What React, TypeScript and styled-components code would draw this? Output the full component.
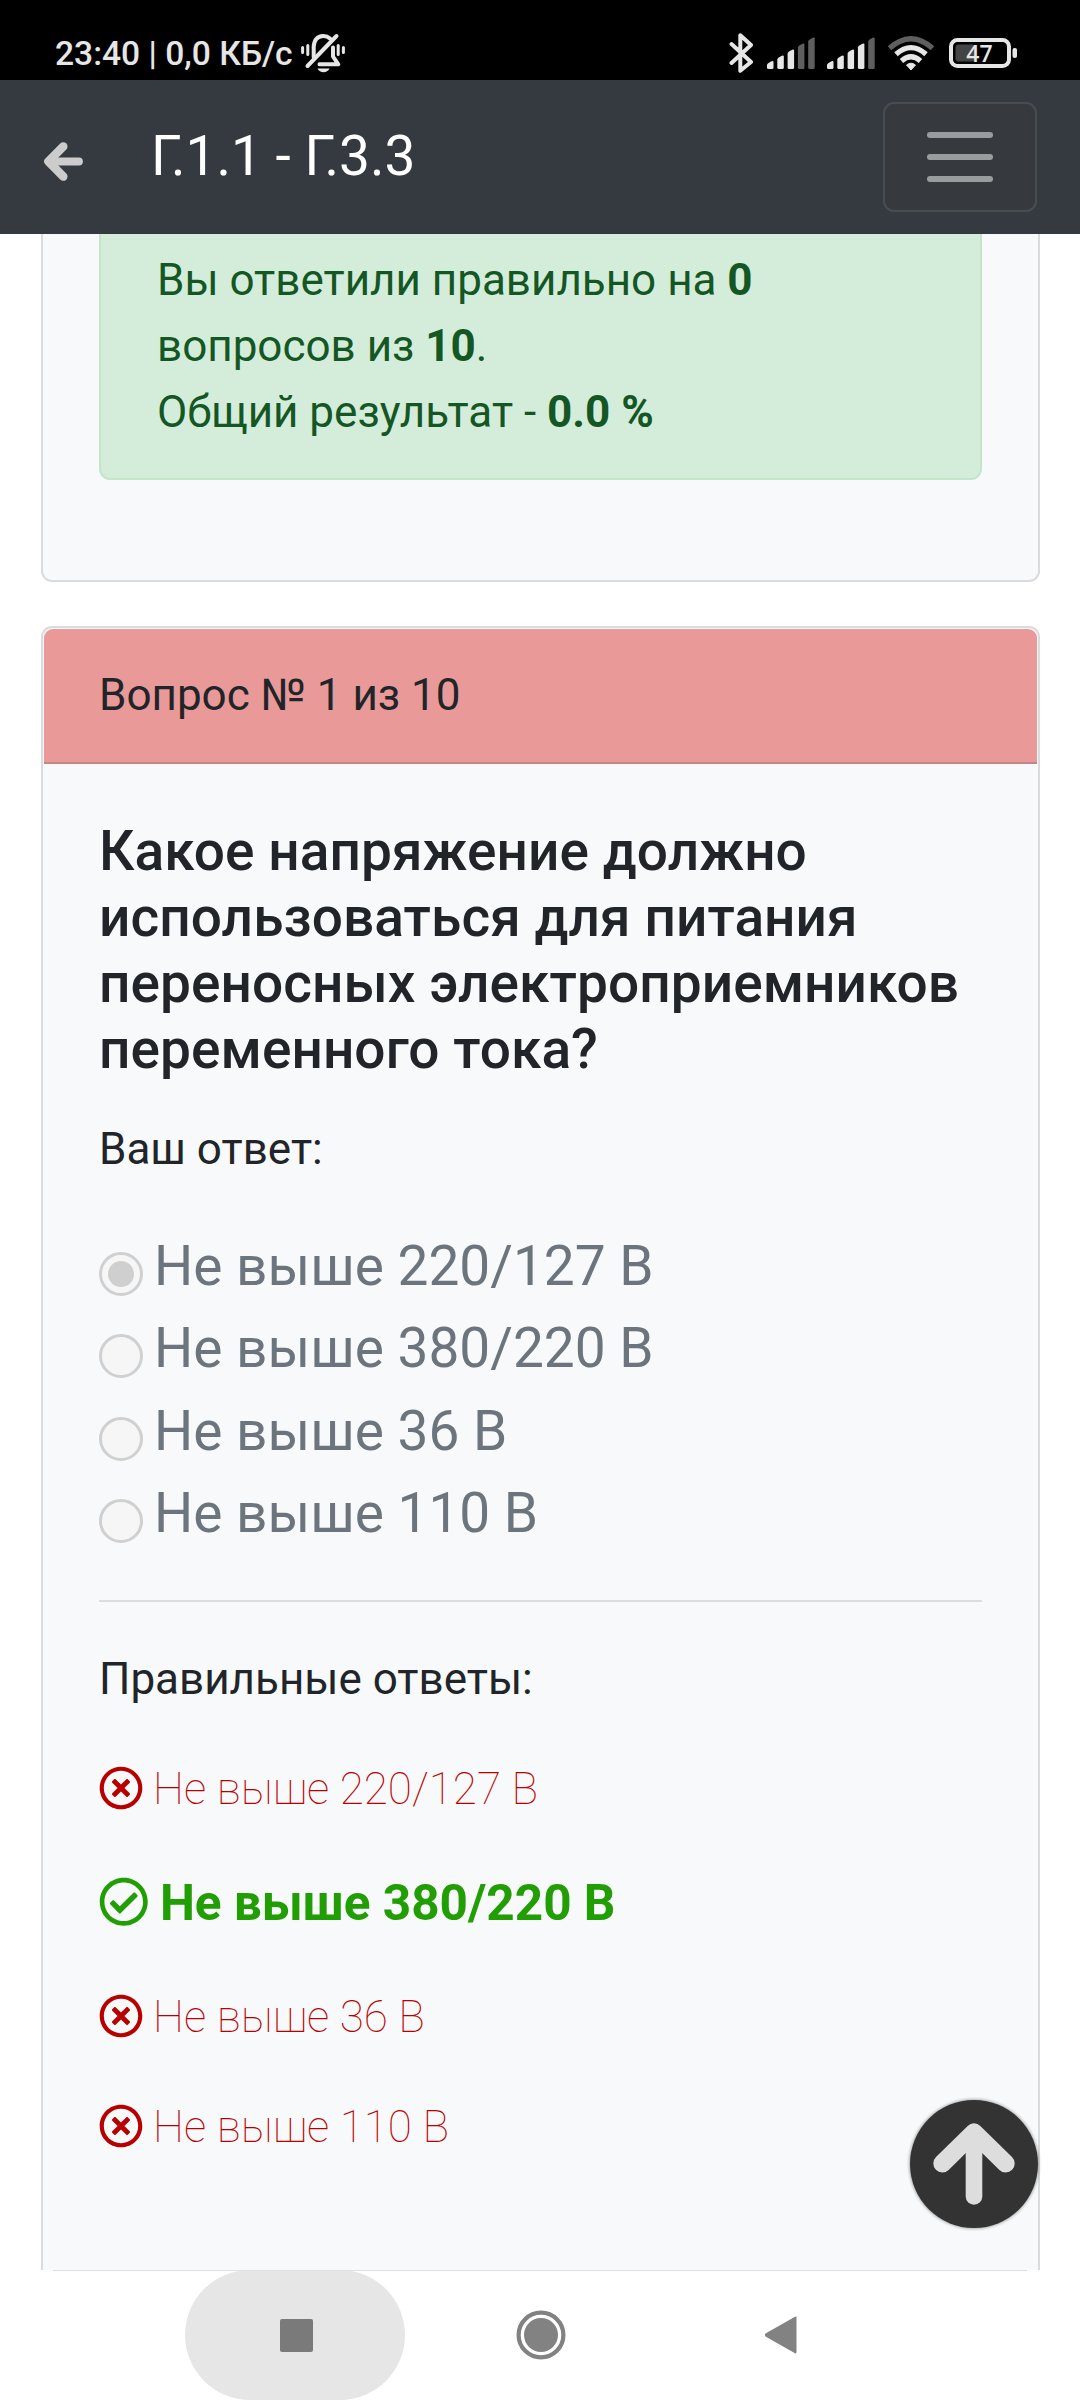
import React from "react";
import styled, { createGlobalStyle } from "styled-components";
import { FaRegTimesCircle, FaRegCheckCircle } from "react-icons/fa";

const GlobalStyle = createGlobalStyle`
  *, *::before, *::after { box-sizing: border-box; }
  body { margin: 0; background: #fff; }
  p, h1, h2 { margin: 0; }
`;

const Screen = styled.div`
  position: relative;
  display: flex;
  flex-direction: column;
  width: 1080px;
  height: 2400px;
  overflow: hidden;
  background: #fff;
  color: #212529;
  font-family: Roboto, "Noto Sans", sans-serif;
  font-size: 44px;
  line-height: 66px;
`;

const StatusBar = styled.div`
  flex: none;
  display: flex;
  justify-content: space-between;
  height: 80px;
  padding: 30px 63px 0 55px;
  background: #000;
  color: #e6e6e6;
`;

const StatusGroup = styled.div`
  display: flex;
  height: 46px;
  align-items: center;
`;

const Clock = styled.span`
  font-size: 33.6px;
  font-weight: 500;
  line-height: 46px;
  margin-top: 1px;
  white-space: nowrap;
  margin-right: 8px;
`;

const StatusIcon = styled.svg<{ $gap?: number }>`
  display: block;
  flex: none;
  margin-left: ${(p) => p.$gap ?? 0}px;
`;

const Header = styled.header`
  flex: none;
  display: flex;
  align-items: center;
  height: 154px;
  padding: 0 43px 0 44px;
  background: #343a40;
  color: #fff;
`;

const BackLink = styled.span`
  flex: none;
  display: flex;
  margin-top: 9px;
  color: #ccc;
  transform: rotate(-90deg);
`;

const HeaderTitle = styled.h1`
  flex: 1;
  margin-left: 68px;
  margin-top: -2px;
  font-size: 55px;
  font-weight: 400;
  line-height: 66px;
`;

const MenuButton = styled.button`
  display: flex;
  flex-direction: column;
  align-items: center;
  justify-content: center;
  gap: 16px;
  width: 154px;
  height: 110px;
  padding: 0;
  border: 2px solid #484d51;
  border-radius: 11px;
  background: #363a3f;
`;

const MenuLine = styled.span`
  width: 66px;
  height: 6px;
  border-radius: 3px;
  background: #999c9f;
`;

const Content = styled.main`
  flex: none;
  height: 2036px;
  padding: 0 40px 0 41px;
  overflow: hidden;
`;

const ResultCard = styled.section`
  height: 348px;
  padding: 0 56px;
  border: 2px solid #dadbdd;
  border-top: 0;
  border-radius: 0 0 11px 11px;
  background: #f8f9fa;
`;

const Alert = styled.div`
  height: 246px;
  padding: 13px 56px 0;
  border: 2px solid #c3e6cb;
  border-top: 0;
  border-radius: 0 0 11px 11px;
  background: #d4edda;
  color: #155724;
`;

const QuestionCard = styled.section`
  height: 1660px;
  margin-top: 44px;
  border: 2px solid #dadbdd;
  border-bottom: 0;
  border-radius: 11px 11px 0 0;
  background: #f8f9fa;
`;

const CardHeader = styled.div`
  height: 135px;
  margin: 1px 1px 0;
  padding: 33px 55px;
  border-bottom: 2px solid #c58587;
  border-radius: 9px 9px 0 0;
  background: #ea9999;
`;

const CardBody = styled.div`
  padding: 54px 56px 0;
`;

const Question = styled.h2`
  font-size: 55px;
  font-weight: 500;
  line-height: 66px;
  letter-spacing: 0.07px;
  white-space: nowrap;
`;

const Label = styled.p<{ $top: number }>`
  margin-top: ${(p) => p.$top}px;
`;

const Options = styled.div`
  margin-top: 43px;
`;

const Option = styled.label`
  display: flex;
  align-items: flex-start;
  height: 82.4px;
  color: #6c757d;
  font-size: 55px;
  line-height: 82px;
`;

const Radio = styled.span`
  flex: none;
  display: flex;
  align-items: center;
  justify-content: center;
  width: 44px;
  height: 44px;
  margin: 27px 11px 0 0;
  border: 3px solid #d0d0d0;
  border-radius: 50%;
  background: #f6f6f7;
`;

const RadioDot = styled.span`
  width: 26px;
  height: 26px;
  border-radius: 50%;
  background: #cfcfcf;
`;

const Divider = styled.hr`
  height: 2px;
  margin: 45px 0 0;
  border: 0;
  background: #dcdddf;
`;

const Answers = styled.div`
  display: flex;
  flex-direction: column;
  margin-top: 44px;
`;

const Answer = styled.div<{ $correct?: boolean }>`
  display: flex;
  align-items: center;
  height: ${(p) => (p.$correct ? 74 : 66)}px;
  margin-bottom: 44px;
  color: ${(p) => (p.$correct ? "#219e03" : "#b90000")};
  font-size: ${(p) => (p.$correct ? 49.5 : 44)}px;
  font-weight: ${(p) => (p.$correct ? 700 : 100)};
  line-height: ${(p) => (p.$correct ? 74 : 66)}px;

  svg {
    flex: none;
    width: 1em;
    height: 1em;
    margin: -2px 0.23em 0 0;
  }
`;

const ScrollTop = styled.button`
  position: absolute;
  left: 910px;
  top: 2100px;
  display: flex;
  align-items: center;
  justify-content: center;
  width: 128px;
  height: 128px;
  padding: 0;
  border: 0;
  border-radius: 50%;
  background: #333;
  box-shadow: 0 0 3px 1px rgba(0, 0, 0, 0.3);
  color: #ddd;
`;

const NavBar = styled.nav`
  position: relative;
  flex: none;
  display: flex;
  align-items: center;
  height: 130px;
  padding-left: 185px;
  background: #fff;

  &::before {
    content: "";
    position: absolute;
    left: 53px;
    right: 53px;
    top: 0;
    height: 1px;
    background: #dfe1e3;
  }
`;

const RecentPill = styled.div`
  display: flex;
  align-items: center;
  justify-content: center;
  width: 220px;
  height: 130px;
  border-radius: 65px;
  background: #e6e6e6;
`;

const RecentSquare = styled.span`
  width: 33px;
  height: 33px;
  margin-left: 2px;
  border-radius: 2px;
  background: #7a7a7a;
`;

const NavIcon = styled.svg<{ $gap: number }>`
  margin-left: ${(p) => p.$gap}px;
`;

const ThickArrow = ({ size }: { size: number }) => (
  <svg width={size} height={size} viewBox="0 0 82 82" fill="none" stroke="currentColor" strokeLinecap="round" strokeLinejoin="round">
    <path d="M9.3 40.5L41 9.3L72.7 40.5" strokeWidth="18" />
    <path d="M41 14V73.500" strokeWidth="16.600" />
  </svg>
);

const SignalIcon = ({ level, gap }: { level: number; gap: number }) => (
  <StatusIcon width="48" height="32" viewBox="0 0 48 32" $gap={gap}>
    {[8, 13.5, 19.5, 25.5, 31.5].map((h, i) => (
      <path
        key={h}
        d={`M${i * 10.3} ${33 - h + 3}Q${i * 10.3} ${33 - h + 2} ${i * 10.3 + 1.5} ${33 - h + 1}L${i * 10.3 + 4} ${32.4 - h}Q${i * 10.3 + 6.5} ${31.6 - h} ${i * 10.3 + 6.5} ${33 - h}V30.5Q${i * 10.3 + 6.5} 32 ${i * 10.3 + 5} 32H${i * 10.3 + 1.5}Q${i * 10.3} 32 ${i * 10.3} 30.5Z`}
        fill={i < level ? "#e6e6e6" : "#5f5f5f"}
      />
    ))}
  </StatusIcon>
);

const options = ["Не выше 220/127 В", "Не выше 380/220 В", "Не выше 36 В", "Не выше 110 В"];
const chosen = 0;
const correct = 1;

export default function App() {
  return (
    <>
      <GlobalStyle />
      <Screen>
        <StatusBar>
          <StatusGroup>
            <Clock>23:40 | 0,0 КБ/с</Clock>
            <StatusIcon width="44" height="40" viewBox="0 0 44 40" fill="none" stroke="#e6e6e6" strokeWidth="4" strokeLinecap="round">
              <path d="M1.6 14.500v5M6.800 12.500v9M37.200 12.500v9M42.400 14.500v5" strokeWidth="3" />
              <path d="M12.700 24V13.500Q13.500 3.500 22 3Q26 2.800 29 5.500" />
              <path d="M6.500 33L35.500 3" />
              <path d="M32 14.500V23.500L37.300 31.300H18.500" strokeLinejoin="round" />
              <path d="M16.500 35.500h12q-2 3.800-6 3.800t-6-3.800z" fill="#e6e6e6" stroke="none" />
            </StatusIcon>
          </StatusGroup>
          <StatusGroup>
            <StatusIcon width="25" height="40" viewBox="0 0 25 40" fill="none" stroke="#e6e6e6" strokeWidth="4" strokeLinejoin="round" strokeLinecap="round">
              <path d="M2.5 11L22 29L11.300 37.700V2.300L22 12L2.5 30" />
            </StatusIcon>
            <SignalIcon level={3} gap={13} />
            <SignalIcon level={4} gap={12} />
            <StatusIcon width="46" height="35" viewBox="0 0 46 35" fill="none" strokeWidth="5.200" $gap={13}>
              <path d="M1.5 12.200Q23-6.800 44.500 12.200" stroke="#5f5f5f" />
              <path d="M8 18.200Q23 5 38 18.200" stroke="#e6e6e6" />
              <path d="M13.500 25Q23 16.500 32.500 25" stroke="#e6e6e6" />
              <path d="M18.500 29q4.500-3.600 9 0L23 34z" fill="#e6e6e6" stroke="#e6e6e6" strokeWidth="1" strokeLinejoin="round" />
            </StatusIcon>
            <StatusIcon width="68" height="30" viewBox="0 0 68 30" $gap={15}>
              <rect x="2" y="2" width="58" height="26" rx="6.500" fill="none" stroke="#e6e6e6" strokeWidth="4" />
              <rect x="6.500" y="6.500" width="20" height="17" rx="3" fill="#444" />
              <rect x="63.500" y="10" width="4.500" height="10" rx="2" fill="#e6e6e6" />
              <text x="30.500" y="24" textAnchor="middle" fontFamily="Open Sans, Roboto, sans-serif" fontSize="23" fontWeight="600" fill="#e6e6e6">47</text>
            </StatusIcon>
          </StatusGroup>
        </StatusBar>

        <Header>
          <BackLink>
            <ThickArrow size={39} />
          </BackLink>
          <HeaderTitle>Г.1.1 - Г.3.3</HeaderTitle>
          <MenuButton aria-label="Меню">
            <MenuLine />
            <MenuLine />
            <MenuLine />
          </MenuButton>
        </Header>

        <Content>
          <ResultCard>
            <Alert>
              Вы ответили правильно на <b>0</b>
              <br />
              вопросов из <b>10</b>.
              <br />
              Общий результат - <b>0.0 %</b>
            </Alert>
          </ResultCard>

          <QuestionCard>
            <CardHeader>Вопрос № 1 из 10</CardHeader>
            <CardBody>
              <Question>
                Какое напряжение должно
                <br />
                использоваться для питания
                <br />
                переносных электроприемников
                <br />
                переменного тока?
              </Question>
              <Label $top={34}>Ваш ответ:</Label>
              <Options>
                {options.map((text, i) => (
                  <Option key={text}>
                    <Radio>{i === chosen && <RadioDot />}</Radio>
                    {text}
                  </Option>
                ))}
              </Options>
              <Divider />
              <Label $top={44}>Правильные ответы:</Label>
              <Answers>
                {options.map((text, i) => (
                  <Answer key={text} $correct={i === correct}>
                    {i === correct ? <FaRegCheckCircle /> : <FaRegTimesCircle />}
                    {text}
                  </Answer>
                ))}
              </Answers>
            </CardBody>
          </QuestionCard>
        </Content>

        <NavBar>
          <RecentPill>
            <RecentSquare />
          </RecentPill>
          <NavIcon width="50" height="50" viewBox="0 0 50 50" $gap={111}>
            <circle cx="25" cy="25" r="22.400" fill="none" stroke="#828282" strokeWidth="4.200" />
            <circle cx="25" cy="25" r="17" fill="#828282" />
          </NavIcon>
          <NavIcon width="34" height="40" viewBox="0 0 34 40" $gap={198}>
            <path d="M1.500 18.500L31 1.800Q32.500 1 32.500 3V37Q32.500 39 31 38.200L1.500 21.500Q0 20 1.500 18.500Z" fill="#828282" />
          </NavIcon>
        </NavBar>

        <ScrollTop aria-label="Наверх">
          <ThickArrow size={82} />
        </ScrollTop>
      </Screen>
    </>
  );
}
